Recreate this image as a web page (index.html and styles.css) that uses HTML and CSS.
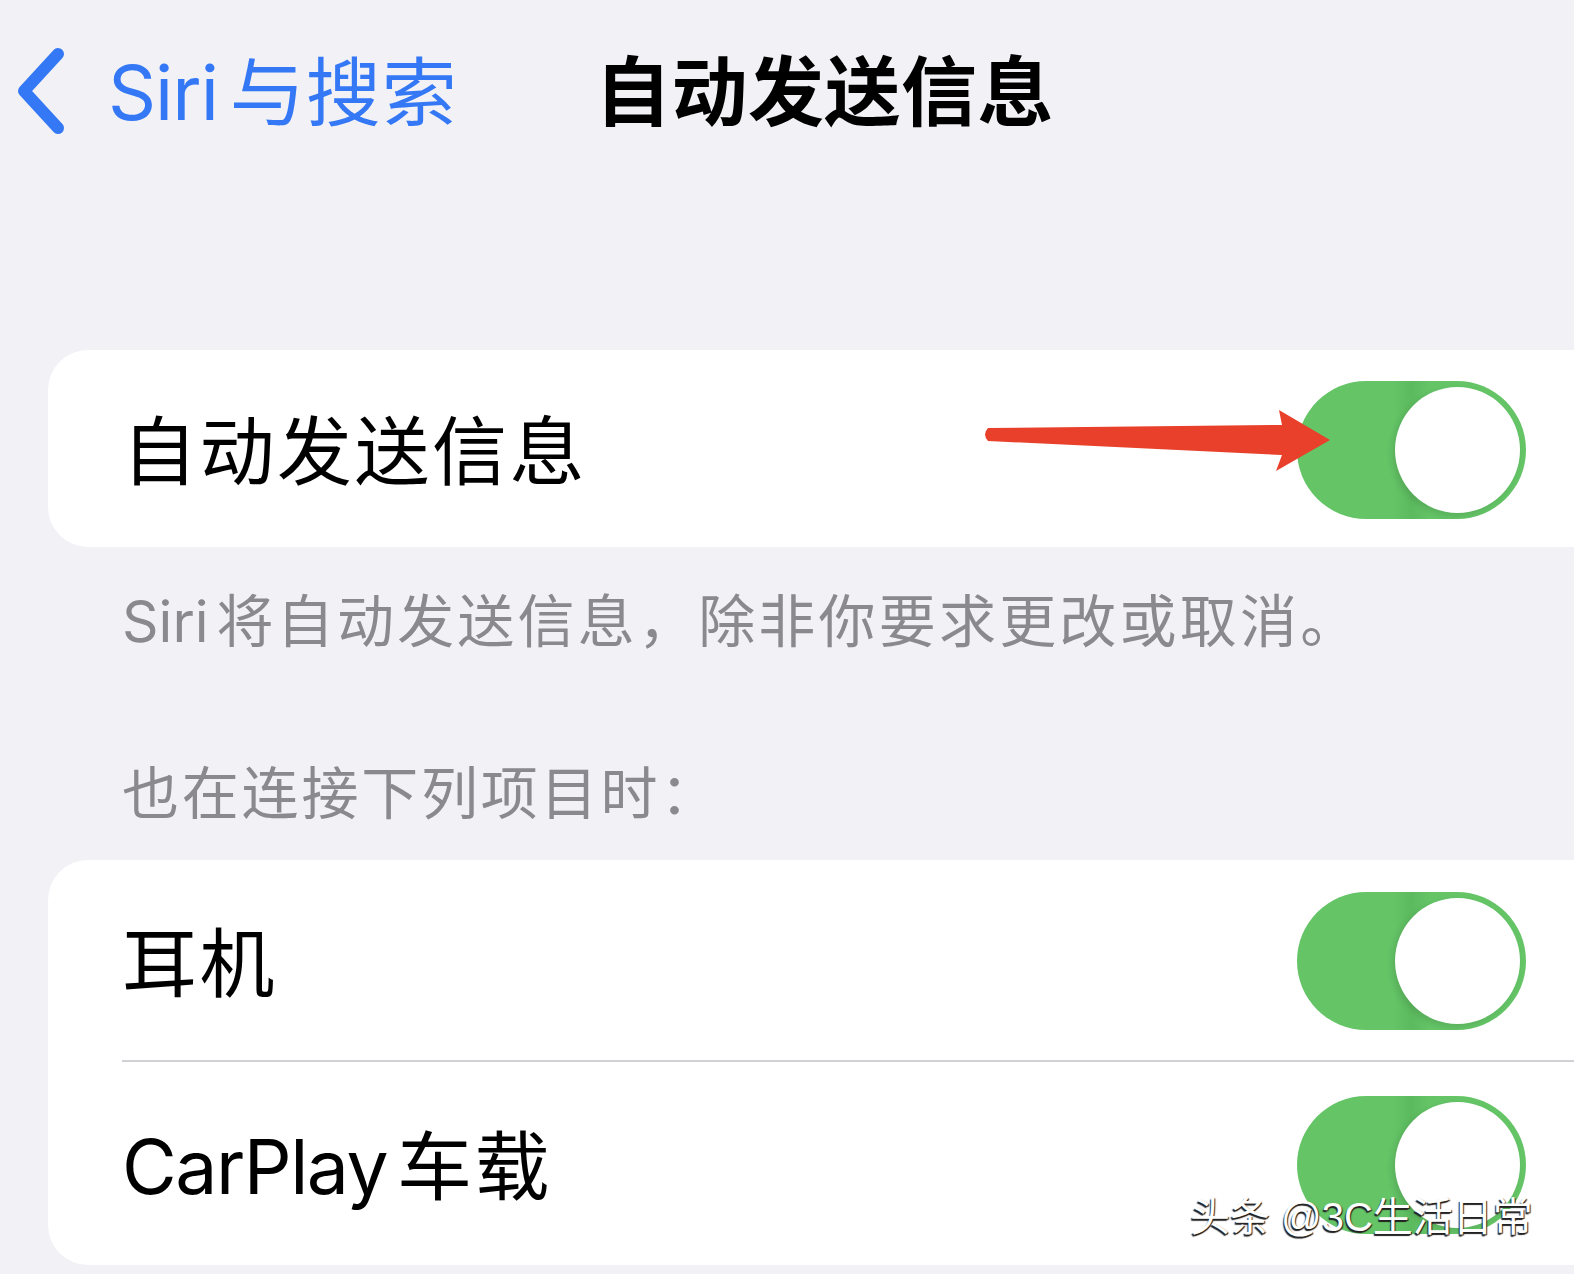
FILE: index.html
```html
<!DOCTYPE html>
<html lang="zh-CN">
<head>
<meta charset="utf-8">
<link rel="stylesheet" href="styles.css">
</head>
<body>
<div class="page">
  <header class="nav">
    <div class="back">
      <svg class="chevron" viewBox="0 0 60 90" width="60" height="90">
        <path d="M44 8 L10 45 L44 82" fill="none" stroke="#3478f6" stroke-width="12" stroke-linecap="round" stroke-linejoin="round"/>
      </svg>
      <span class="back-label"><span class="latin">Siri</span>与搜索</span>
    </div>
    <h1 class="title">自动发送信息</h1>
  </header>

  <section class="card card-first">
    <div class="row">
      <span class="row-label">自动发送信息</span>
      <span class="toggle"><span class="knob"></span></span>
    </div>
  </section>
  <p class="footer"><span class="latin">Siri</span>将自动发送信息，除非你要求更改或取消。</p>

  <p class="group-header">也在连接下列项目时：</p>
  <section class="card card-second">
    <div class="row row-sep">
      <span class="row-label">耳机</span>
      <span class="toggle"><span class="knob"></span></span>
    </div>
    <div class="row row-last">
      <span class="row-label"><span class="latin car">CarPlay</span>车载</span>
      <span class="toggle"><span class="knob"></span></span>
    </div>
  </section>

  <svg class="arrow" viewBox="0 0 1574 1274" width="1574" height="1274">
    <path d="M988 428 L1282 425 L1279 410 L1330 440 L1276 471 L1282 455 L988 441 Q982 434.5 988 428 Z" fill="#e8402a"/>
  </svg>

  <div class="watermark">头条 @3C生活日常</div>
</div>
</body>
</html>
```
FILE: styles.css
```css
html, body {
  margin: 0;
  padding: 0;
  background: #f1f1f6;
  overflow: hidden;
}
.page {
  position: relative;
  width: 1574px;
  height: 1274px;
  font-family: Inter, "Noto Sans CJK SC", sans-serif;
  color: #000;
}
.latin {
  margin-right: 12px;
  letter-spacing: -1px;
}
.latin.car {
  letter-spacing: -1.5px;
  margin-right: 10px;
}
.nav {
  height: 184px;
  display: flex;
  align-items: center;
  padding-left: 14px;
}
.back {
  display: flex;
  align-items: center;
  width: 581px;
}
.chevron {
  display: block;
  margin-top: -2px;
}
.back-label {
  margin-left: 34px;
  font-size: 75px;
  color: #3478f6;
  line-height: 1;
  letter-spacing: 1px;
}
.title {
  margin: 0;
  font-size: 76px;
  font-weight: 700;
  line-height: 1;
  letter-spacing: 0.5px;
}
.card {
  background: #fff;
  margin-left: 48px;
  margin-right: -60px;
  border-radius: 40px;
  padding-left: 74px;
}
.card-first {
  margin-top: 166px;
}
.row {
  height: 200px;
  display: flex;
  align-items: center;
  justify-content: space-between;
  padding-right: 108px;
}
.card-first .row {
  height: 197px;
}
.row-sep {
  border-bottom: 2px solid #d1d1d5;
}
.row-last {
  height: 203px;
}
.row-label {
  font-size: 75px;
  line-height: 1;
  letter-spacing: 2.5px;
  padding-top: 6px;
}
.toggle {
  position: relative;
  width: 229px;
  height: 138px;
  border-radius: 69px;
  background: linear-gradient(90deg, #64c466 0%, #64c466 42%, #5cba5e 50%, #64c466 58%);
  flex: none;
  margin-top: 2px;
}
.knob {
  position: absolute;
  right: 6px;
  top: 6px;
  width: 125px;
  height: 126px;
  border-radius: 50%;
  background: #fff;
  box-shadow: -3px 3px 6px rgba(0, 0, 0, 0.1);
}
.footer {
  margin: 37px 0 0 122px;
  font-size: 57px;
  line-height: 76px;
  color: #8a8a8e;
  letter-spacing: 3.2px;
}
.footer .latin {
  letter-spacing: 0;
  margin-right: 8px;
}
.group-header {
  margin: 96px 0 0 122px;
  font-size: 57px;
  line-height: 76px;
  color: #8a8a8e;
  letter-spacing: 2.8px;
}
.card-second {
  margin-top: 28px;
}
.arrow {
  position: absolute;
  left: 0;
  top: 0;
  pointer-events: none;
}
.watermark {
  position: absolute;
  left: 1190px;
  top: 1193px;
  font-family: "Liberation Sans", "Noto Sans CJK SC", sans-serif;
  font-size: 40px;
  line-height: 48px;
  color: #fff;
  white-space: nowrap;
  text-shadow: -1px 2px 1px #222, 1px 1px 1px #222;
}
```
